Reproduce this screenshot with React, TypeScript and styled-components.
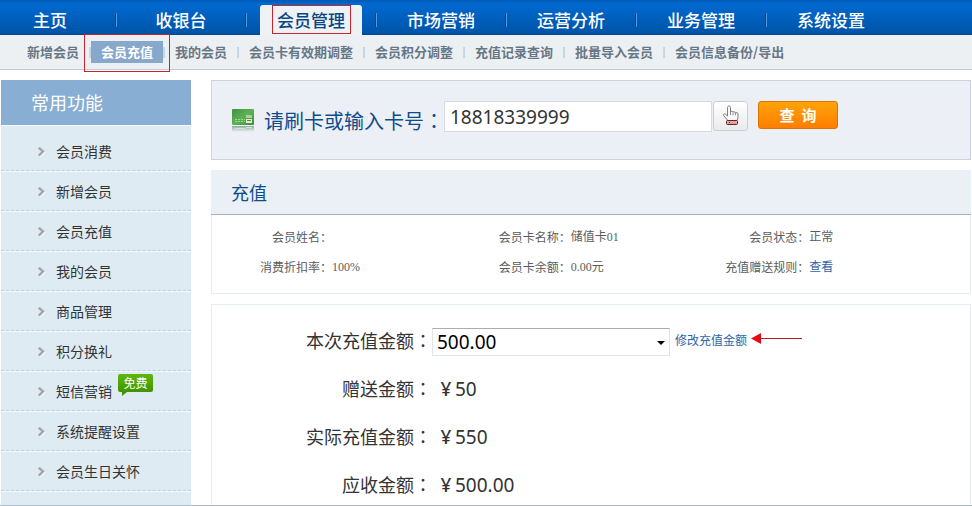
import React from "react";
import styled, { createGlobalStyle, css } from "styled-components";

const sans = `"Noto Sans CJK SC", sans-serif`;

const GlobalStyle = createGlobalStyle`
  *, *::before, *::after { box-sizing: border-box; }
  body { margin: 0; background: #fff; color: #333; font-family: ${sans}; }
  ul, dl, dd, h2, p { margin: 0; padding: 0; }
  ul { list-style: none; }
  a { color: inherit; text-decoration: none; }
`;

const Page = styled.div`
  min-height: 100vh;
  display: flex;
  flex-direction: column;
  border-bottom: 1px solid #aebfca;
`;

const MainNav = styled.nav`
  height: 35px;
  flex: none;
  background: linear-gradient(#0059b3 0, #0069cf 4px, #0055a8 33px, #00428c 35px);
`;

const MainNavList = styled.ul`
  height: 100%;
  display: flex;
`;

const MainNavItem = styled.li`
  width: 130px;
  display: flex;
  justify-content: center;
  position: relative;

  &:first-child { width: 116px; padding-right: 16px; }

  &:not(:last-child)::after {
    content: "";
    position: absolute;
    right: -1px;
    top: 13px;
    width: 2px;
    height: 14px;
    background: #5298dc;
    border-left: 1px solid #00478f;
  }
`;

const MainNavLink = styled.a<{ $active?: boolean }>`
  width: 102px;
  margin-top: 5px;
  line-height: 30px;
  text-align: center;
  white-space: nowrap;
  font-size: 17px;
  font-weight: 500;
  color: #fff;
  position: relative;
  ${(p) =>
    p.$active &&
    css`
      background: #eff2f5;
      color: #0a4684;
      border-radius: 3px 3px 0 0;
    `}
`;

const Outline = styled.span<{ $inset: string }>`
  position: absolute;
  inset: ${(p) => p.$inset};
  border: 1px solid #c8242b;
  pointer-events: none;
`;

const SubNav = styled.nav`
  height: 35px;
  flex: none;
  padding: 6px 0 0 17px;
  background: #edf0f3;
  border-bottom: 1px solid #c6ccd1;
`;

const SubNavList = styled.ul`
  display: flex;
`;

const SubNavItem = styled.li`
  display: flex;
  align-items: center;

  &:not(:last-child)::after {
    content: "";
    width: 2px;
    height: 11px;
    background: #c0d6e4;
    border-left: 1px solid #ecccc4;
  }
`;

const SubNavLink = styled.a<{ $active?: boolean }>`
  position: relative;
  padding: 0 10px;
  line-height: 22px;
  font-size: 13px;
  font-weight: 700;
  white-space: nowrap;
  color: ${(p) => (p.$active ? "#fff" : "#677785")};
  background: ${(p) => (p.$active ? "#87a7cb" : "transparent")};
`;

const Body = styled.div`
  flex: 1;
  display: flex;
  gap: 20px;
  padding: 10px 1px 0;
`;

const Sidebar = styled.aside`
  width: 190px;
  flex: none;
  background: #deebf3;
`;

const SidebarTitle = styled.h2`
  padding-left: 30px;
  line-height: 45px;
  font-size: 18px;
  font-weight: 400;
  color: #fff;
  background: #88aed4;
  border-bottom: 1px solid #f5fafd;
`;

const SideList = styled.ul`
  padding-top: 5px;
`;

const SideItem = styled.li`
  height: 40px;
  border-bottom: 1px dashed #bcd0de;
  box-shadow: 0 1px 0 #f3f9fc;
`;

const SideLink = styled.a`
  height: 100%;
  display: inline-flex;
  align-items: center;
  gap: 10px;
  padding-left: 36px;
  position: relative;
  font-size: 14px;
  white-space: nowrap;
`;

const Badge = styled.span`
  position: absolute;
  left: 100%;
  top: 3px;
  margin-left: 6px;
  width: 35px;
  line-height: 18px;
  border-radius: 2px;
  text-align: center;
  font-size: 12px;
  color: #fff;
  background: linear-gradient(#5fb70a, #409400);

  &::after {
    content: "";
    position: absolute;
    left: 4px;
    top: 100%;
    border-top: 4px solid #409400;
    border-right: 5px solid transparent;
  }
`;

const Main = styled.main`
  flex: 1;
  min-width: 0;
  display: flex;
  flex-direction: column;
`;

const SearchPanel = styled.form`
  display: flex;
  align-items: flex-end;
  gap: 10px;
  padding: 20px 20px 27px;
  border: 1px solid #cdd3e0;
  background: #ecf0f6;
`;

const SearchLabel = styled.label`
  line-height: 22px;
  font-size: 20px;
  white-space: nowrap;
  color: #0f4c8a;
`;

const CenteredColon = styled.span`
  font-family: "Noto Sans CJK TC", sans-serif;
`;

const SearchControls = styled.div`
  display: flex;
  align-items: flex-start;
  margin-left: -10px;
`;

const CardInput = styled.input`
  width: 268px;
  height: 31px;
  padding: 0 5px;
  border: 1px solid #d6dae0;
  font: 19px/28px "Noto Sans", sans-serif;
  color: #333;
  background: #fff;
`;

const HandButton = styled.button`
  width: 35px;
  height: 30px;
  margin: 0 10px 0 1px;
  padding: 0;
  display: grid;
  place-items: center;
  border: 1px solid #cdced2;
  border-radius: 3px;
  background: linear-gradient(#fff, #eaeaec);
`;

const QueryButton = styled.button`
  width: 80px;
  height: 28px;
  padding: 0;
  border: 1px solid #db7400;
  border-radius: 3px;
  background: linear-gradient(#ffa307, #ff7d00);
  color: #fff;
  font: 700 15px/20px ${sans};
`;

const SectionTitle = styled.h2`
  margin-top: 10px;
  padding-left: 20px;
  line-height: 44px;
  font-size: 18px;
  font-weight: 400;
  color: #0f4c8a;
  background: #eaf0f5;
  border-bottom: 1px solid #9fb2c2;
`;

const InfoPanel = styled.dl`
  display: grid;
  grid-template-columns: repeat(3, 1fr);
  padding: 7px 42px 11px 0;
  border: 1px solid #e6edf2;
  border-top: 0;
  font-size: 12px;
  line-height: 30px;
  color: #5c5c5c;
`;

const InfoItem = styled.div`
  display: flex;
`;

const InfoLabel = styled.dt`
  width: 120px;
  text-align: right;
`;

const InfoValue = styled.dd`
  font-family: "Liberation Serif", ${sans};
`;

const TextLink = styled.a`
  font-size: 12px;
  color: #2f64a6;
`;

const RechargePanel = styled.form`
  flex: 1;
  display: flex;
  flex-direction: column;
  gap: 22px;
  margin-top: 10px;
  padding-top: 23px;
  border: 1px solid #e6edf2;
  border-bottom: 0;
`;

const AmountRow = styled.div`
  height: 26px;
  display: flex;
  align-items: flex-start;
  line-height: 24px;
`;

const AmountLabel = styled.label`
  width: 220px;
  text-align: right;
  font-size: 18px;
`;

const AmountValue = styled.output`
  padding-left: 5px;
  display: flex;
  align-items: baseline;
  font: 19px/26px "Noto Sans", sans-serif;
`;

const Currency = styled.span`
  width: 18px;
  text-align: center;
  font-weight: 500;
`;

const SelectBox = styled.div`
  position: relative;
  width: 238px;
  margin-right: 5px;

  &::after {
    content: "";
    position: absolute;
    right: 5px;
    top: 13px;
    border: 4px solid transparent;
    border-top-color: #000;
    border-bottom: 0;
    pointer-events: none;
  }
`;

const AmountSelect = styled.select`
  display: block;
  width: 100%;
  height: 28px;
  padding: 0 4px;
  appearance: none;
  border: 1px solid #dfe4e8;
  border-top-color: #a9acb0;
  border-radius: 0;
  background: #fff;
  color: #000;
  font: 19px/26px "Noto Sans", sans-serif;
`;

const ArrowSvg = styled.svg`
  margin-left: 4px;
  flex: none;
`;

const Chevron = () => (
  <svg width="9" height="12" viewBox="0 0 9 12" fill="none" aria-hidden="true">
    <path d="M2.5 3.6 6.8 7.6 2.5 11.6" stroke="#fff" strokeWidth="2" />
    <path d="M1.8 2.6 6 6.6 1.8 10.6" stroke="#a3a6a9" strokeWidth="2.4" />
  </svg>
);

const CardIcon = () => (
  <svg width="22" height="23" viewBox="0 0 22 23" aria-hidden="true">
    <defs>
      <linearGradient id="card" x1="0" y1="0" x2="1" y2="1">
        <stop offset="0" stopColor="#3f9140" />
        <stop offset=".5" stopColor="#5db254" />
        <stop offset="1" stopColor="#3a8d3c" />
      </linearGradient>
      <linearGradient id="reflection" x1="0" y1="0" x2="0" y2="1">
        <stop offset="0" stopColor="#8fae98" />
        <stop offset="1" stopColor="#ecf0f6" />
      </linearGradient>
    </defs>
    <rect width="22" height="16" rx="1" fill="url(#card)" />
    <rect x="14" y="6" width="6" height="3" fill="#a5d39c" />
    <rect x="14" y="10" width="6" height="4" fill="#e4ead2" />
    <rect x="15" y="11" width="4" height="1" fill="#6c7f4b" />
    <path d="M3 10.5h10M3 12.5h10" stroke="#a4d39c" strokeDasharray="2 1" />
    <rect y="17" width="22" height="6" fill="url(#reflection)" />
    <path d="M3 19.5h10M14 18.5h6" stroke="#d5e0da" />
  </svg>
);

const HandIcon = () => (
  <svg width="18" height="22" viewBox="0 0 18 22" aria-hidden="true">
    <path
      d="M5.5 15 1.8 10.8C.8 9.4 2.4 8.3 3.5 9.2L5.5 11V2.5c0-2 3-2 3 0V7c.4-1 2.2-1 2.5.2.5-.9 2.1-.7 2.3.6.8-.6 2.7-.2 2.7 1.2v3.5c0 1.2-1 1.8-1 3H5.5z"
      fill="#fafafa"
      stroke="#7c7c7c"
    />
    <path d="M8.5 7v3M11 7.5v2.6M13.4 8v2.3" stroke="#8c8c8c" />
    <rect x="4.5" y="15.5" width="11" height="4" rx="1" fill="#e8a0a0" stroke="#5c2626" />
    <path d="M7 17.5h1" stroke="#5c2626" />
  </svg>
);

const PointerArrow = () => (
  <ArrowSvg width="52" height="22" viewBox="0 0 52 22" aria-hidden="true">
    <path d="M8 10.5h43" stroke="#c01a20" />
    <path d="M0 10.5 10 5v11z" fill="#e60a12" />
  </ArrowSvg>
);

const mainItems = ["主页", "收银台", "会员管理", "市场营销", "运营分析", "业务管理", "系统设置"];
const subItems = [
  "新增会员", "会员充值", "我的会员", "会员卡有效期调整", "会员积分调整",
  "充值记录查询", "批量导入会员", "会员信息备份/导出",
];
const sideItems = [
  "会员消费", "新增会员", "会员充值", "我的会员", "商品管理",
  "积分换礼", "短信营销", "系统提醒设置", "会员生日关怀",
];
const info: [string, React.ReactNode][] = [
  ["会员姓名", ""],
  ["会员卡名称", "储值卡01"],
  ["会员状态", "正常"],
  ["消费折扣率", "100%"],
  ["会员卡余额", "0.00元"],
  ["充值赠送规则", <TextLink href="#rules">查看</TextLink>],
];
const amounts = [
  { id: "bonus", label: "赠送金额", value: "50" },
  { id: "actual", label: "实际充值金额", value: "550" },
  { id: "due", label: "应收金额", value: "500.00" },
];

export default function App() {
  return (
    <>
      <GlobalStyle />
      <Page>
        <MainNav>
          <MainNavList>
            {mainItems.map((name) => (
              <MainNavItem key={name}>
                <MainNavLink href="#" $active={name === "会员管理"}>
                  {name}
                  {name === "会员管理" && <Outline $inset="0 11px 1px 12px" />}
                </MainNavLink>
              </MainNavItem>
            ))}
          </MainNavList>
        </MainNav>
        <SubNav>
          <SubNavList>
            {subItems.map((name) => (
              <SubNavItem key={name}>
                <SubNavLink href="#" $active={name === "会员充值"}>
                  {name}
                  {name === "会员充值" && <Outline $inset="-7px -7px -9px" />}
                </SubNavLink>
              </SubNavItem>
            ))}
          </SubNavList>
        </SubNav>
        <Body>
          <Sidebar>
            <SidebarTitle>常用功能</SidebarTitle>
            <SideList>
              {sideItems.map((name) => (
                <SideItem key={name}>
                  <SideLink href="#">
                    <Chevron />
                    {name}
                    {name === "短信营销" && <Badge>免费</Badge>}
                  </SideLink>
                </SideItem>
              ))}
            </SideList>
          </Sidebar>
          <Main>
            <SearchPanel onSubmit={(e) => e.preventDefault()}>
              <CardIcon />
              <SearchLabel htmlFor="card-no">
                请刷卡或输入卡号<CenteredColon lang="zh-TW">：</CenteredColon>
              </SearchLabel>
              <SearchControls>
                <CardInput id="card-no" defaultValue="18818339999" />
                <HandButton type="button" aria-label="选择会员">
                  <HandIcon />
                </HandButton>
                <QueryButton type="submit">查&nbsp;&nbsp;询</QueryButton>
              </SearchControls>
            </SearchPanel>
            <SectionTitle>充值</SectionTitle>
            <InfoPanel>
              {info.map(([label, value]) => (
                <InfoItem key={label}>
                  <InfoLabel>{label}：</InfoLabel>
                  <InfoValue>{value}</InfoValue>
                </InfoItem>
              ))}
            </InfoPanel>
            <RechargePanel>
              <AmountRow>
                <AmountLabel htmlFor="amount">
                  本次充值金额<CenteredColon lang="zh-TW">：</CenteredColon>
                </AmountLabel>
                <SelectBox>
                  <AmountSelect id="amount" defaultValue="500.00">
                    <option>500.00</option>
                  </AmountSelect>
                </SelectBox>
                <TextLink href="#edit">修改充值金额</TextLink>
                <PointerArrow />
              </AmountRow>
              {amounts.map((a) => (
                <AmountRow key={a.id}>
                  <AmountLabel htmlFor={a.id}>
                    {a.label}
                    <CenteredColon lang="zh-TW">：</CenteredColon>
                  </AmountLabel>
                  <AmountValue id={a.id}>
                    <Currency>¥</Currency>
                    {a.value}
                  </AmountValue>
                </AmountRow>
              ))}
            </RechargePanel>
          </Main>
        </Body>
      </Page>
    </>
  );
}
